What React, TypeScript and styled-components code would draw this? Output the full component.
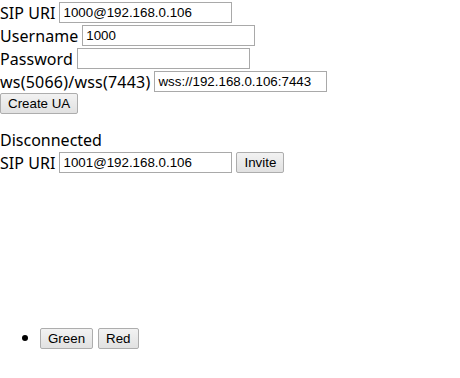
import styled, { createGlobalStyle } from 'styled-components';

const GlobalStyle = createGlobalStyle`
  html, body {
    margin: 0;
    padding: 0;
    background: #fff;
  }
  body {
    font-family: "Noto Sans", "Segoe UI", "Liberation Sans", sans-serif;
    font-size: 16px;
    color: #000;
  }
`

const Page = styled.div`
  display: flex;
  flex-direction: column;
  padding-top: 1px;
  width: 460px;
`

const Row = styled.div`
  display: flex;
  align-items: center;
  gap: 4px;
  height: 23px;
  white-space: nowrap;
`

const Label = styled.span<{ $wide?: boolean }>`
  line-height: 20px;
  letter-spacing: ${props => (props.$wide ? '0.22px' : '0.05px')};
`

const TextInput = styled.input`
  box-sizing: border-box;
  width: 173px;
  height: 21px;
  padding: 1px 3px;
  border: 1px solid #a9a9a9;
  font-family: "Liberation Sans", Arial, sans-serif;
  font-size: 13.33px;
  color: #000;
  background: #fff;
  outline: none;
`

const Button = styled.button`
  box-sizing: border-box;
  height: 21px;
  padding: 0 7px;
  border: 1px solid #adadad;
  border-radius: 2px;
  background: linear-gradient(#f2f2f2, #e1e1e1);
  font-family: "Liberation Sans", Arial, sans-serif;
  font-size: 13.33px;
  color: #000;
  cursor: pointer;
`

const ButtonRow = styled.div`
  display: flex;
  height: 21px;
`

const Status = styled.div`
  margin-top: 16px;
  line-height: 21px;
  height: 21px;
`

const RemoteView = styled.div`
  height: 152px;
`

const ControlList = styled.ul`
  margin: 0;
  padding-left: 40px;
`

const ControlItem = styled.li`
  height: 23px;
  font-size: 16px;
  & > * + * {
    margin-left: 5px;
  }
`

export default function App() {
  return (
    <>
      <GlobalStyle />
      <Page>
        <Row>
          <Label>SIP URI</Label>
          <TextInput defaultValue="1000@192.168.0.106" />
        </Row>
        <Row>
          <Label>Username</Label>
          <TextInput defaultValue="1000" />
        </Row>
        <Row>
          <Label>Password</Label>
          <TextInput type="password" />
        </Row>
        <Row>
          <Label $wide>ws(5066)/wss(7443)</Label>
          <TextInput defaultValue="wss://192.168.0.106:7443" />
        </Row>
        <ButtonRow>
          <Button>Create UA</Button>
        </ButtonRow>
        <Status>Disconnected</Status>
        <Row>
          <Label>SIP URI</Label>
          <TextInput defaultValue="1001@192.168.0.106" />
          <Button>Invite</Button>
        </Row>
        <RemoteView />
        <ControlList>
          <ControlItem>
            <Button>Green</Button>
            <Button>Red</Button>
          </ControlItem>
        </ControlList>
      </Page>
    </>
  );
}
